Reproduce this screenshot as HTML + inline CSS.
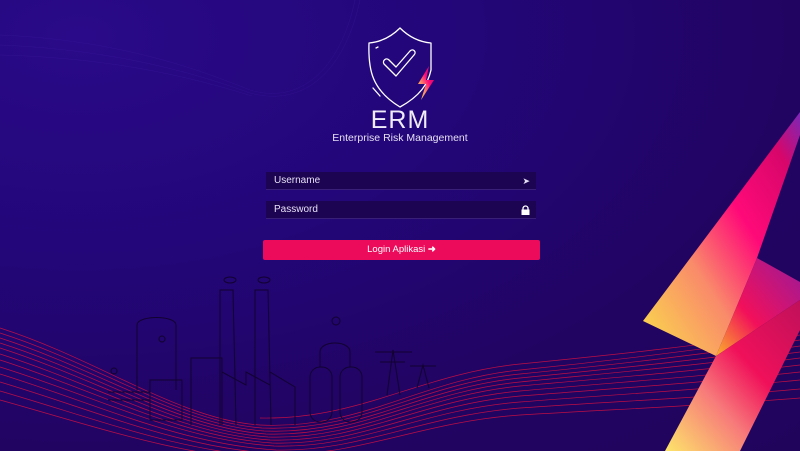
<!DOCTYPE html>
<html><head><meta charset="utf-8"><style>
html,body{margin:0;padding:0;}
body{width:800px;height:451px;overflow:hidden;position:relative;background:radial-gradient(ellipse at 10% 8%,#2a0a88 0%,#23067a 35%,#210462 70%,#20045c 100%);font-family:"Liberation Sans",sans-serif;}
svg.bg{position:absolute;left:0;top:0;}
.logo{position:absolute;left:0;width:800px;text-align:center;color:#fff;}
.inp{position:absolute;left:266px;width:270px;height:18px;background:#1c0452;border-bottom:1px solid #3a1f78;color:#e6e0f5;font-size:10px;line-height:18px;box-sizing:border-box;padding-left:8px;}
.btn{position:absolute;left:263px;top:240px;width:277px;height:20px;background:#ec0a5a;border-radius:2px;color:#fff;font-size:9.5px;line-height:20px;text-align:center;}
</style></head><body>
<svg class="bg" width="800" height="451" viewBox="0 0 800 451">
<defs>
<linearGradient id="g1" x1="0" y1="1" x2="1" y2="0"><stop offset="0" stop-color="#fbe04a"/><stop offset="0.35" stop-color="#f98a6a"/><stop offset="0.6" stop-color="#ff0a78"/><stop offset="0.85" stop-color="#d8066a"/><stop offset="1" stop-color="#7a28b8"/></linearGradient>
<linearGradient id="g2" x1="0" y1="1" x2="1" y2="0"><stop offset="0" stop-color="#fbb22a"/><stop offset="0.4" stop-color="#f2105a"/><stop offset="1" stop-color="#9a1a9a"/></linearGradient>
<linearGradient id="g3" x1="0" y1="1" x2="1" y2="0"><stop offset="0" stop-color="#fde66a"/><stop offset="0.35" stop-color="#f77a7a"/><stop offset="0.6" stop-color="#f0105a"/><stop offset="1" stop-color="#c0105a"/></linearGradient>
</defs>
<g fill="none" stroke="#3a1a9a" stroke-width="0.5" opacity="0.5">
<path d="M0 35 C120 40 200 70 250 90 C300 105 340 70 355 0"/>
<path d="M0 45 C120 50 200 75 250 93 C305 108 345 70 360 0"/>
<path d="M0 55 C120 58 200 80 252 96"/>
</g>
<g fill="none" stroke="#d81040" stroke-width="0.7" opacity="0.85">
<path d="M0 328 C100 360 180 420 260 425 C360 430 420 380 520 370 C620 360 700 350 800 335"/>
<path d="M0 333 C100 365 180 422 262 428 C360 432 420 384 520 374 C620 364 700 355 800 340"/>
<path d="M0 338 C100 370 180 425 264 431 C360 435 420 388 520 378 C620 368 700 360 800 346"/>
<path d="M0 343 C100 375 180 428 266 434 C360 437 420 392 520 382 C620 372 700 365 800 352"/>
<path d="M0 348 C100 380 180 431 268 437 C360 440 420 396 520 386 C620 377 700 371 800 358"/>
<path d="M0 354 C100 386 180 434 270 440 C360 443 420 400 520 391 C620 382 700 377 800 365"/>
<path d="M0 360 C100 392 180 437 272 443 C360 446 420 405 520 396 C620 388 700 383 800 372"/>
<path d="M0 367 C100 398 180 440 274 446 C360 449 420 410 520 402 C620 394 700 390 800 380"/>
<path d="M0 374 C100 405 180 444 276 450 C360 452 420 416 520 408 C620 401 700 398 800 389"/>
<path d="M0 382 C100 412 180 448 278 454 C360 456 420 422 520 415 C620 409 700 406 800 398"/>
<path d="M0 391 C100 420 180 452 280 458"/>
<path d="M0 400 C100 428 180 456 282 462"/>
<path d="M260 418 C360 420 420 374 520 364 C620 354 700 346 800 330"/>
</g>
<g fill="none" stroke="#120230" stroke-width="1">
<path d="M220 425 L220 290 L233 290 L236 425"/><path d="M255 425 L255 290 L268 290 L271 425"/>
<path d="M191 425 L191 358 L222 358 L222 425"/>
<path d="M222 390 L222 372 L246 385 L246 372 L270 385 L270 372 L295 387 L295 425"/>
<path d="M137 390 L137 325 C137 315 176 315 176 325 L176 390"/>
<path d="M150 380 L182 380 L182 420 L150 420 Z"/>
<path d="M108 392 L150 392 M108 400 L150 400"/>
<rect x="310" y="367" width="22" height="55" rx="10"/><rect x="340" y="367" width="22" height="55" rx="10"/>
<path d="M320 367 L320 352 C320 340 350 340 350 352 L350 367"/>
<path d="M387 395 L393 350 L400 395 M375 352 L412 352 M380 362 L405 362"/>
<path d="M417 388 L423 365 L429 388 M410 366 L436 366"/>
<circle cx="336" cy="321" r="4"/><circle cx="162" cy="339" r="3"/><circle cx="114" cy="371" r="3"/>
<ellipse cx="230" cy="280" rx="6" ry="3"/><ellipse cx="264" cy="280" rx="6" ry="3"/>
</g>
<polygon points="800,112 800,135 757,258 716,356 643,321" fill="url(#g1)"/>
<polygon points="757,258 800,282 800,300 716,356" fill="url(#g2)"/>
<polygon points="716,356 800,300 800,330 740,451 665,451" fill="url(#g3)"/>
<g fill="none" stroke="#fff" stroke-width="1.3" stroke-linecap="round" stroke-linejoin="round">
<path d="M400 28 C390 38 380 42 369 43 C368 70 372 90 400 107 C420 96 428 84 431 70 L431 43 C420 42 410 38 400 28 Z"/>
<path d="M384 64 L396 76 L414 55 C417 52 413 48 410 51 L396 67 L389 60 C386 57 382 61 384 64 Z"/>
<path d="M373 88 L380 96"/><path d="M376 48 L378 47"/>
</g>
<polygon points="429,66 418,84 426,84 421,100 434,80 426,80" fill="url(#g1)"/>
</svg>
<div class="logo" style="top:106px;font-size:25px;letter-spacing:1px;font-weight:300;color:#f0ecfa;">ERM</div>
<div class="logo" style="top:132px;font-size:10.5px;color:#e6e0f5;">Enterprise Risk Management</div>
<div class="inp" style="top:172px;">Username<span style="position:absolute;right:6px;font-size:9px;">&#10148;</span></div>
<div class="inp" style="top:201px;">Password<svg style="position:absolute;right:6px;top:4px" width="9" height="10" viewBox="0 0 9 10"><path d="M2 5V3.5a2.5 2.5 0 0 1 5 0V5" stroke="#fff" fill="none" stroke-width="1.3"/><rect x="0.5" y="4.5" width="8" height="5.5" fill="#fff"/></svg></div>
<div class="btn">Login Aplikasi <span style="font-weight:bold;">&#10140;</span></div>
</body></html>
